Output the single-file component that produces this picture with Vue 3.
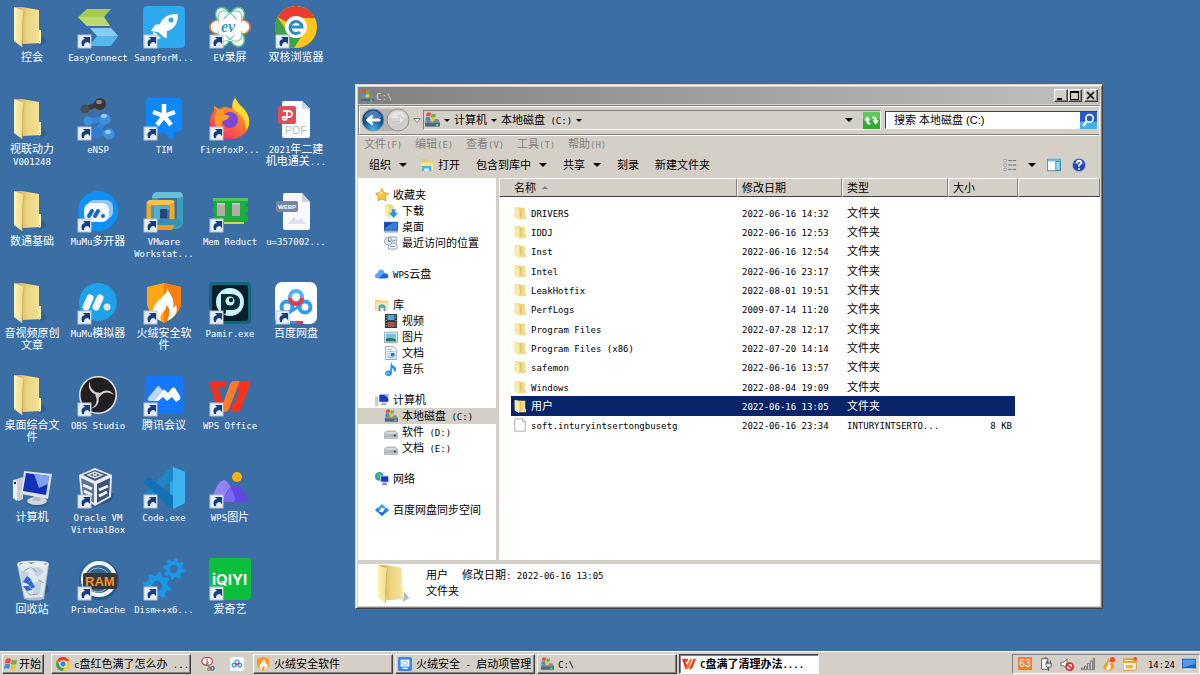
<script setup>
import { h } from 'vue'

// Splits a string into Han and Latin runs so each gets its own face and size.
const T = (props) =>
  h(
    'span',
    { class: 'txt' },
    (props.s.match(/[\u2e80-\uffff]+|[^\u2e80-\uffff]+/g) || []).map((r) =>
      h('span', { class: r.charCodeAt(0) > 0x2e7f ? 'han' : 'lat' }, r)
    )
  )
T.props = ['s']

const gear = (cx, cy, r, teeth, hole) => {
  let d = ''
  const n = teeth * 4
  for (let i = 0; i < n; i++) {
    const rad = i % 4 < 2 ? r : r * 0.74
    const a = ((i + 0.5) / n) * Math.PI * 2
    d += (i ? 'L' : 'M') + (cx + rad * Math.cos(a)).toFixed(1) + ' ' + (cy + rad * Math.sin(a)).toFixed(1)
  }
  return `${d}ZM${cx - hole} ${cy}a${hole} ${hole} 0 1 0 ${hole * 2} 0a${hole} ${hole} 0 1 0 ${-hole * 2} 0Z`
}

const baidu = `<circle cx="12" cy="25" r="5.500" fill="none" stroke="#2f9cf0" stroke-width="4"/><circle cx="30" cy="25" r="5.500" fill="none" stroke="#2f9cf0" stroke-width="4"/><path d="M15 21l6-3 6 3M16 29q6-2 10-8" stroke="#2f9cf0" stroke-width="3" fill="none"/><circle cx="21" cy="15" r="6" fill="#fff" stroke="#4bb4f6" stroke-width="4"/><path d="M15 16a6 6 0 0 0 12 0" fill="none" stroke="#e8384f" stroke-width="4"/>`
const flag = (x, y, s) => `<g transform="translate(${x} ${y}) scale(${s})"><path d="M1 1.500Q4-.5 7 1.500L6 6.500Q3.500 5 0 6.500Z" fill="#e8502a"/><path d="M8 2Q11 3.500 14 2L13 7Q10 8.500 7 7Z" fill="#6cb33e"/><path d="M0 7.500Q3 6 6 7.500L5 12.500Q2.500 11-1 12.500Z" fill="#3b8ede"/><path d="M7 8Q10 9.500 13 8L12 13Q9 14.500 6 13Z" fill="#f8bf2d"/></g>`

const pics = {
  folder: `<path d="M29 40l7-4-5-7z" fill="#24466f" opacity=".35"/><path d="M4 1h7l17 3v20l2 1v12l-18 1z" fill="url(#fBody)"/><path d="M28 24h2v12l-2 2z" fill="#f8f3b6"/><path d="M28 35h1v1h-1z" fill="#9cc08a"/><path d="M3 1l10 4-1 8-1 28-8-6z" fill="url(#fLeaf)"/><path d="M13 5l-1 8-1 28" fill="none" stroke="#c9ad58" stroke-width=".8"/>`,
  easy: `<path d="M1 11L10 3h24l-7 8 6 9H10z" fill="#a5cc4d"/><path d="M1 11h26l6 9H10z" fill="#b9db6e"/><path d="M13 22h21l7 8-7 10H12l8-10z" fill="#57b5ea"/><path d="M13 22h21l7 8H20z" fill="#85cdf5"/>`,
  sangfor: `<rect width="42" height="42" rx="4" fill="#2ea8ef"/><path d="M35 8C27 8 20 10 17 18L12 19 8 25l7 1 7 6 1 0 1-1v-6l3-1C33 21 35 15 35 8z" fill="#fff"/><path d="M10 25l8 7-8 3z" fill="#fff" opacity=".9"/><circle cx="28" cy="14" r="2.500" fill="#2ea8ef"/><path d="M10 33c0-4 2-5 4-5" stroke="#fff" fill="none" stroke-width="2"/>`,
  ev: `<g fill="#fff" stroke-width="1.600"><ellipse cx="14" cy="10" rx="7" ry="9" transform="rotate(-28 14 10)" stroke="#4cb487"/><ellipse cx="28" cy="10" rx="7" ry="9" transform="rotate(28 28 10)" stroke="#4cb487"/><ellipse cx="9" cy="21" rx="8" ry="7" stroke="#e08145"/><ellipse cx="33" cy="21" rx="8" ry="7" stroke="#e08145"/><ellipse cx="14" cy="32" rx="7" ry="9" transform="rotate(28 14 32)" stroke="#4cb487"/><ellipse cx="28" cy="32" rx="7" ry="9" transform="rotate(-28 28 32)" stroke="#4cb487"/></g><circle cx="21" cy="21" r="14" fill="#fff"/><g fill="none" stroke="#6fc3a2"><ellipse cx="21" cy="20" rx="9" ry="17" transform="rotate(32 21 20)"/><ellipse cx="21" cy="20" rx="9" ry="17" transform="rotate(-32 21 20)"/></g><ellipse cx="21" cy="21" rx="13" ry="9" fill="#fff"/><text x="12" y="26" font-family="Liberation Serif, serif" font-style="italic" font-weight="bold" font-size="16" fill="#3c9bd0">ev</text>`,
  chrome: `<circle cx="21" cy="21" r="21" fill="#fcc61b"/><path d="M21 21L2.500 11A21 21 0 0 1 40 12H21z" fill="#ea3d2f"/><path d="M2.500 11A21 21 0 0 0 19 42l9-14-14 0z" fill="#3fa24b"/><circle cx="21" cy="21" r="11" fill="#fff"/><path d="M15 21h12a6 6 0 1 0-2 5" fill="none" stroke="#2a8dc8" stroke-width="3"/>`,
  ensp: `<g stroke-linecap="round"><path d="M8 11L16 8 24 4" stroke="#39393d" stroke-width="5" fill="none"/><circle cx="8" cy="11" r="4.500" fill="#4b4b50"/><circle cx="23" cy="6" r="6" fill="#3c3736"/><ellipse cx="22" cy="4" rx="3" ry="2" fill="#8d8783"/><path d="M12 23L28 21 20 34 32 36" stroke="#3586da" stroke-width="6" fill="none" stroke-linejoin="round"/><circle cx="11" cy="23" r="4.500" fill="#3e90e0"/><circle cx="28" cy="21" r="5.500" fill="#3e90e0"/><circle cx="19" cy="35" r="6" fill="#2f7dcf"/><circle cx="32" cy="36" r="5.500" fill="#3e90e0"/><ellipse cx="27" cy="18" rx="3" ry="2" fill="#98cbf6"/><ellipse cx="31" cy="34" rx="3" ry="2" fill="#98cbf6"/></g>`,
  tim: `<path d="M7 0h28q4 0 4 4v26q0 4-4 4l-5 0v8l-8-7H7q-4 0-4-4V4q0-4 4-4z" fill="#0c88fb"/><path d="M21 18V6M21 18l-11-4M21 18l11-4M21 18l-7 9M21 18l7 9" stroke="#fff" stroke-width="4.500"/>`,
  firefox: `<path d="M26 0c3 4 3 6 8 10 7 7 8 17 3 24-6 8-21 10-30 3C-1 31-1 20 5 13V8l5 3 5-2c4 0 6 1 8 2 0-4 0-7 3-11z" fill="url(#fox)"/><path d="M26 0c3 4 3 6 8 10 7 7 8 17 3 22 0-9-3-14-8-17-6-4-7-8-3-15z" fill="#ffdb33"/><circle cx="21" cy="22" r="8" fill="#7a46dc"/><path d="M5 8l6 4 6-2-3 6 7 2c-2 4-6 4-8 6 0 0-3 6 4 9-10 0-15-11-9-20z" fill="#ff9b2b"/>`,
  pdf: `<path d="M9 3h18l8 8v27q0 2-2 2H9q-2 0-2-2V5q0-2 2-2z" fill="#fdfdfe"/><path d="M27 3l8 8h-8z" fill="#c9d6e6"/><rect x="3" y="8" width="18" height="18" rx="2" fill="#e34b57"/><path d="M8 13h5q4 0 4 3t-4 3h-1M12 13v6q0 3-3 3-2-1-1-3h4" fill="none" stroke="#fff" stroke-width="1.800"/><text x="10" y="36" font-family="Liberation Sans, sans-serif" font-size="11" fill="#b9bcc3">PDF</text>`,
  webp: `<path d="M10 3h17l8 9v26q0 2-2 2H10q-2 0-2-2V5q0-2 2-2z" fill="#f8f9fc"/><path d="M27 3l8 9h-8z" fill="#c6cfe0"/><path d="M13 34l6-7 4 4 3-3 5 6z" fill="#dde1ec"/><rect x="1" y="11" width="22" height="11" rx="2" fill="#7784a6"/><text x="3" y="19" font-family="Liberation Sans, sans-serif" font-weight="bold" font-size="6" fill="#fff">WEBP</text>`,
  mumu2: `<circle cx="21" cy="21" r="20" fill="#1090f4"/><rect x="10" y="10" width="26" height="19" rx="7" fill="#8fc8fa"/><rect x="7" y="13" width="25" height="19" rx="7" fill="#f4faff"/><path d="M12 26l3-5M18 26l3-5" stroke="#1266d8" stroke-width="4" stroke-linecap="round"/><circle cx="26" cy="26" r="2" fill="#1266d8"/>`,
  vm: `<rect x="12" y="5" width="25" height="31" rx="4" fill="none" stroke="#3d9fbd" stroke-width="6"/><path d="M14 2h22q4 0 4 5l-6 1H9q0-6 5-6z" fill="#66bfd6"/><rect x="6" y="13" width="23" height="19" rx="2" fill="none" stroke="#f7a823" stroke-width="5"/><path d="M6 10h23q2 0 3 2l-6 3H8l-5-2z" fill="#fdc24c"/><path d="M11 16h15v4h-9v10h-6z" fill="#52aeca"/><path d="M17 19h7v9h-7z" fill="#23486e"/><path d="M12 29h26v7H12z" fill="#3392b2"/><path d="M12 35h19q0 5-4 5H12z" fill="#f09b24"/>`,
  mem: `<path d="M4 8h35v5l-2 2 2 3v4l-2 2 2 3v5H4v-5l2-2-2-3v-4l2-2-2-3z" fill="#1eac3d"/><path d="M4 8h35v3H4z" fill="#43c95c"/><path d="M15 32h20v2H15z" fill="#d8cf4a"/><rect x="8" y="13" width="8" height="13" fill="#b6aaa4"/><rect x="23" y="13" width="8" height="13" fill="#b6aaa4"/><path d="M8 14h8M23 14h8" stroke="#e4dcd6"/>`,
  mumu: `<circle cx="21" cy="20" r="19" fill="#1da2ea"/><path d="M9 25l4-9M19 25l4-9" stroke="#f4f8fb" stroke-width="7" stroke-linecap="round"/><circle cx="30" cy="25" r="3.500" fill="#dfe7ee"/>`,
  huorong: `<path d="M4 5L21 1l17 4v18q-3 11-17 18Q7 34 4 23z" fill="#ffa712"/><path d="M21 1l17 4v18q-3 11-17 18z" fill="#f47f10"/><path d="M24 6c2 7-14 13-14 23 0 5 4 8 8 10-3-8 7-10 5-16 5 3 4 10 1 16 9-4 11-10 9-16l-3 3C32 16 27 13 24 6z" fill="#fff"/>`,
  pamir: `<rect width="42" height="42" rx="4" fill="#12687a"/><rect x="3" y="3" width="36" height="36" rx="3" fill="#061e2a"/><circle cx="21" cy="20" r="14" fill="#c9f3f4"/><path d="M12 35V12h9q10 0 10 8 0 9-10 8h-4v3z" fill="#0b2a38"/><circle cx="21" cy="19" r="4.500" fill="#c9f3f4"/><circle cx="22" cy="18" r="2.200" fill="#0b2a38"/>`,
  baidu: `<rect width="42" height="42" rx="7" fill="#fff"/>${baidu}<path d="M15 39h6v3h-6z" fill="#2f8cf0"/><path d="M21 39h7v3h-7z" fill="#e8384f"/>`,
  obs: `<circle cx="21" cy="21" r="19" fill="#e9e9e9"/><circle cx="21" cy="21" r="17.500" fill="#211f21"/><g fill="#cfcfd0"><path d="M13 7q-4 10 7 14l2-2Q12 17 13 7z"/><path d="M13 7q-4 10 7 14l2-2Q12 17 13 7z" transform="rotate(120 21 21)"/><path d="M13 7q-4 10 7 14l2-2Q12 17 13 7z" transform="rotate(240 21 21)"/></g><circle cx="21" cy="21" r="2.500" fill="#cfcfd0"/>`,
  meeting: `<rect x="2" y="2" width="38" height="38" rx="4" fill="#1677fa"/><path d="M5 24L14 13q2-2 3 0l5 7-7 7H7q-3 0-2-3z" fill="#bcd7ff"/><path d="M12 27L20 16q1-1 2 0l3 3 4-5q2-1 3 0l5 8q1 3-1 4l-3 2-4-5-5 4-4-4-5 4z" fill="#fff"/>`,
  wps: `<path d="M0 7h18l-2 7H9l5 14-2 10H9Q4 22 0 7z" fill="#f22d22"/><path d="M11 38L21 10q1-3 5-3h5L20 35q-1 3-5 3z" fill="#ff7a2a"/><path d="M21 38l3-9 2-1 5-14 3-7h8L32 35q-1 3-5 3z" fill="#f5331f"/><path d="M31 7h4l-3 8h-4z" fill="#f5331f"/>`,
  computer: `<ellipse cx="27" cy="37" rx="12" ry="4" fill="#2c5580" opacity=".5"/><path d="M2 14l10-3v22l-4 2-6-3z" fill="#c9ccd0"/><path d="M2 14l4 1v20l-4-3z" fill="#f0f1f2"/><path d="M3 16h2v2H3z" fill="#222"/><ellipse cx="26" cy="35" rx="10" ry="4" fill="#d5d7d9"/><path d="M23 29h6l1 6h-8z" fill="#b9bdc2"/><path d="M13 5l28 3-4 25-27-5z" fill="#dfe2e5"/><path d="M15 7l23 3-3 19-23-4z" fill="#1230b8"/><path d="M23 8l15 2-1 8-9 4z" fill="#7fa5ee"/>`,
  vbox: `<path d="M3 34l15 7 16-6 3-8z" fill="#1e3b5e" opacity=".5"/><path d="M2 9L18 2l17 7-1 22-16 9L4 30z" fill="#e8ecf3"/><path d="M6 9l12-5 13 5-13 6z" fill="#43536c"/><path d="M4 12l13 6v19L6 30z" fill="#5d7594"/><path d="M20 18l13-6-1 18-12 7z" fill="#3a5478"/><path d="M11 9l7-3 7 3-7 3zM15 7l6 4M21 7l-6 4" fill="none" stroke="#d8dfe8" stroke-width="1.400"/><path d="M6 19l9 4M7 25l8 4M22 24l9-4M22 30l8-4" stroke="#f2f5f9" stroke-width="3"/>`,
  code: `<path d="M30 1l12 5v31l-12 6-3-4V5z" fill="#2ba7ea"/><path d="M30 1v13L6 33l-5-4v-2L26 3z" fill="#1f86c8"/><path d="M30 43V30L6 11l-5 4v2l25 24z" fill="#1172b5"/><path d="M30 1l12 5v31l-12 6z" fill="#3cb2f0"/>`,
  wpspic: `<circle cx="28" cy="11" r="5" fill="#fbb212"/><path d="M3 33q5-18 12-19 5 0 11 19 1 3-3 3H6q-4 0-3-3z" fill="#9382f5"/><path d="M15 33q4-14 13-14 3 1 11 14 2 3-2 3H14q0-1 1-3z" fill="#6149e0"/><path d="M15 33q3-8 7-11 3 5 4 10 1 4-3 4h-9z" fill="#7b68f0"/>`,
  bin: `<path d="M30 40l8-7-2-8z" fill="#24466f" opacity=".4"/><path d="M6 6h32l-5 35q-9 3-20 0z" fill="#aebfcb"/><path d="M7 6l8-3 5 3 7-3 10 3-5 33-18 1z" fill="#dfe8ee"/><path d="M10 12l8 3-3 9-5 3zM20 10l7-2 6 6-7 5zM22 26l9-4-2 14-7 2z" fill="#c2d2df"/><path d="M13 13l7-4 6 5M27 22l6 3M14 31l5 6 8-1" stroke="#8fa5b7" fill="none"/><path d="M12 24l4-6 4 3-3 5zM20 22l4 7-4 2-3-5zM12 28l4 5 5-1-2-4z" fill="#2e67d2"/><ellipse cx="22" cy="6" rx="15" ry="2.500" fill="#7d7f80" stroke="#e9f1f5" stroke-width="1.500"/><path d="M9 7l6-4 5 3 7-3 8 3-8 3H14z" fill="#e6eef3"/>`,
  ram: `<circle cx="22" cy="22" r="20" fill="#275a83"/><circle cx="20" cy="20" r="18" fill="#2e6794"/><circle cx="22" cy="21" r="16" fill="none" stroke="#f0f4f7" stroke-width="4"/><circle cx="21" cy="22" r="12" fill="none" stroke="#9fb8cb" stroke-width="1"/><rect x="6" y="15" width="34" height="16" rx="2" fill="#34373c"/><text x="8" y="28" font-family="Liberation Sans, sans-serif" font-weight="bold" font-size="13" fill="#f7931e">RAM</text>`,
  dism: `<path d="${gear(31, 11, 11, 8, 4)}" fill="#1c96e6" fill-rule="evenodd"/><path d="${gear(14, 28, 14, 8, 5)}" fill="#1c96e6" fill-rule="evenodd"/>`,
  iqiyi: `<rect width="42" height="42" rx="3" fill="#0bbe3c"/><text x="3" y="27" font-family="Inter, sans-serif" font-weight="bold" font-size="15" fill="#fff">iQIYI</text>`
}

// Glyphs on a 16-unit grid.
const small = {
  disk: `<path d="M1 10l3-3h10l2 3v4q0 1-1 1H2q-1 0-1-1z" fill="#78909c"/><path d="M1 11h15v3H1z" fill="#4f6a78"/><path d="M12 12h2v2h-2z" fill="#5fe06c"/>${flag(2, 0, 0.7)}`,
  winflag: flag(1, 1, 1),
  folder: `<path d="M2 1l7 1v12l-7-1z" fill="#e9cf6d"/><path d="M8 2h6v9h1v4H6z" fill="#f0dc8c"/><path d="M2 1l5 2v13l-5-3z" fill="#f8eba9"/><path d="M9 3v10" stroke="#d4b654"/>`,
  file: `<path d="M2 1h9l3 3v11H2z" fill="#fff" stroke="#a3a3a3"/><path d="M11 1v3h3" fill="#eee" stroke="#a3a3a3"/>`,
  star: `<path d="M8 1l2.200 4.600 5 .6-3.700 3.500 1 5L8 12.300 3.500 14.700l1-5L.8 6.200l5-.6z" fill="#ffc936" stroke="#e58a1b"/><path d="M8 3l1 4H4z" fill="#ffe89a"/>`,
  download: `<path d="M1 1l5-1 5 2v11l-5 2-5-2z" fill="#efda84"/><path d="M1 1l5 2v12l-5-2z" fill="#f8eba9"/><path d="M9 6h4v4h3l-5 6-5-6h3z" fill="#2d8fe6"/>`,
  desktop: `<path d="M0 2h16v12H0z" fill="#1f57b4"/><path d="M1 3h14v8H1z" fill="#3b7cd8"/><path d="M1 3h9L1 9z" fill="#1d4396"/><path d="M0 12h16v2H0z" fill="#8fb6e6"/>`,
  recent: `<path d="M5 1h9v11l2 1-2 2H5z" fill="#eef3f8" stroke="#8a9bab"/><circle cx="5" cy="6" r="4.500" fill="#dfeaf4" stroke="#7f95a8"/><path d="M5 3v3h3" stroke="#456" fill="none"/><path d="M10 5h3M10 8h3M7 12h5" stroke="#5d8fc2"/>`,
  cloud: `<path d="M4 13q-4 0-4-3t3-3q1-5 5-4 3 1 3 4l-3 3z" fill="#5aa5f7"/><path d="M4 13l5-5q3-2 5 0 2 2 1 4-1 1-3 1z" fill="#1868dc"/>`,
  library: `<path d="M0 2h6l1 1h8v11H0z" fill="#edd375"/><path d="M1 5h14v9H1z" fill="#f8eaa5"/><path d="M4 15V9q4-4 8 0v6h-2v-4H6v4z" fill="#49a3da"/>`,
  open: `<path d="M1 1h7l1 2h6v11H1z" fill="#f0cc55"/><path d="M1 5h14v9H1z" fill="#fae795"/><path d="M2 9h11v6H2z" fill="#55b5dd"/><path d="M5 12h5v3H5z" fill="#edf8fd"/>`,
  video: `<path d="M1 0h14v16H1z" fill="#2c3236"/><path d="M4 1h8v6H4z" fill="#55a3d8"/><path d="M4 9h8v6H4z" fill="#9c5b46"/><path d="M2.500 1v14M13.500 1v14" stroke="#fff" stroke-dasharray="1 2"/>`,
  picture: `<path d="M.5 2.500h15v12H.5z" fill="#fff" stroke="#829aaf"/><path d="M2 4h12v9H2z" fill="#79c0ea"/><path d="M2 10q5-3 12 1v2H2z" fill="#2b7a59"/>`,
  doc: `<path d="M2 .5h9l3 3v12H2z" fill="#f7fbff" stroke="#7f9cb8"/><path d="M4 4h5M4 6.500h8M4 9h4M4 11.500h4M4 13.500h8" stroke="#7aaad8"/><path d="M8 8h4v4H8z" fill="#2d6fc8"/>`,
  music: `<path d="M8 0q1 4 5 6 2 3-1 6 0-4-3-5v5q0 4-4 4-4-1-4-3 1-4 6-3z" fill="#2090ea"/><ellipse cx="4" cy="13" rx="2" ry="1" fill="#8dcbf8"/>`,
  pc: `<path d="M0 4h4v11H0z" fill="#c9ccd0"/><path d="M4 1h12v10H4z" fill="#dcdfe3"/><path d="M5 2h10v8H5z" fill="#1b36c0"/><path d="M10 2h5v4z" fill="#84a4ee"/><path d="M8 11h4l2 3H6z" fill="#a8adb3"/>`,
  drive: `<path d="M3 7h10l3 3v4q0 1-1 1H1q-1 0-1-1v-4z" fill="#d8dadb" stroke="#90989d"/><path d="M1 10h14v4H1z" fill="#b6bbbe"/><path d="M11 11h3v2h-3z" fill="#4a5054"/>`,
  network: `<circle cx="5" cy="5" r="5" fill="#2c9ed2"/><path d="M2 2q3-2 5 1L4 8Z" fill="#58bb57"/><path d="M6 4h10v8H6z" fill="#cfd6de"/><path d="M7 5h8v6H7z" fill="#1a35c2"/><path d="M9 12h4l1 3H8z" fill="#8c96a2"/>`,
  sync: `<path d="M2 8V7l6-6 5 5h-4L8 5 5 8z" fill="#34a4f8"/><path d="M14 8v1l-6 6-5-5h4l1 1 3-3z" fill="#176be6"/><path d="M0 8l3-3 3 3-3 3zM16 8l-3 3-3-3 3-3z" fill="#2388f2"/>`,
  refresh: `<path d="M0 0h16v16H0z" fill="#2faa35"/><path d="M0 0h16v7H0z" fill="#5dc85b"/><path d="M1 8l3-4 3 4H5q0 2 2 2v2q-4 0-4-4zM15 8l-3 4-3-4h2q0-2-2-2V4q4 0 4 4z" fill="#fff"/>`,
  lens: `<path d="M0 0h16v16H0z" fill="#2458cc"/><path d="M0 9h16v7H0z" fill="#43b0ec"/><circle cx="9" cy="6" r="3.500" fill="none" stroke="#fff" stroke-width="1.600"/><path d="M6.500 8.500L3 13" stroke="#fff" stroke-width="2.200"/>`,
  views: `<g fill="#fff" stroke="#7b92a5"><circle cx="2.500" cy="3" r="1.500"/><circle cx="2.500" cy="8" r="1.500"/><circle cx="2.500" cy="13" r="1.500"/></g><path d="M6 3h4M11 3h4M6 8h4M11 8h4M6 13h4M11 13h4" stroke="#4d5c68"/>`,
  pane: `<path d="M.5 1.500h15v13H.5z" fill="#fff" stroke="#3b87ae"/><path d="M1 2h14v2H1z" fill="#78c0de"/><path d="M10 4h5v10h-5z" fill="#9edcf0" stroke="#3b87ae"/>`,
  help: `<circle cx="8" cy="8" r="7.500" fill="#2648ae" stroke="#a9b8d8"/><path d="M2 6q6-7 12 0-6 3-12 0z" fill="#5d80d8"/><path d="M5.500 6q0-3 2.500-3t2.500 2.500Q10.500 7 8 8.500V10M8 11.500v2" stroke="#fff" stroke-width="1.800" fill="none"/>`,
  chrome: `<g transform="scale(.38)"><circle cx="21" cy="21" r="21" fill="#fcc61b"/><path d="M21 21L2.500 11A21 21 0 0 1 40 12H21z" fill="#ea3d2f"/><path d="M2.500 11A21 21 0 0 0 19 42l9-14-14 0z" fill="#3fa24b"/><circle cx="21" cy="21" r="11" fill="#fff"/><circle cx="21" cy="21" r="8" fill="#3c7ff0"/></g>`,
  snip: `<ellipse cx="7" cy="5" rx="6" ry="4.500" fill="#fff" stroke="#c0432f" stroke-width="1.500"/><path d="M7 2v7l5 5M9 6l-4 3" stroke="#7d8890" stroke-width="1.500" fill="none"/><circle cx="13" cy="13" r="2" fill="none" stroke="#3a6fa8" stroke-width="1.500"/><circle cx="9" cy="14" r="1.500" fill="none" stroke="#c0432f"/>`,
  baidu: `<rect width="16" height="16" rx="3" fill="#fff"/><g transform="scale(.38)">${baidu}</g>`,
  flame: `<path d="M1 2l7-2 7 2v7q-1 4-7 7-6-3-7-7z" fill="#f99a1c"/><path d="M9 2C9 6 4 7 4 11q0 3 3 4-1-3 2-5 2 2 0 5 4-1 4-5 0-2-1-3l-1 1Q11 4 9 2z" fill="#fff"/>`,
  guard: `<rect width="16" height="16" rx="2" fill="#3c85f2"/><path d="M3 3h10v8H3z" fill="#fff"/><circle cx="8" cy="7" r="2.500" fill="none" stroke="#6da4f5"/><path d="M5 13h6" stroke="#fff" stroke-width="1.500"/>`,
  wps: `<path d="M0 2h7L6 5H4l2 5-1 4H4z" fill="#f22d22"/><path d="M4 14L8 4q1-2 2-2h2L8 12q-1 2-2 2z" fill="#ff7a2a"/><path d="M8 14l4-9 1-3h3l-4 10q-1 2-2 2z" fill="#f5331f"/>`,
  plug: `<path d="M3 2h7v12H3zM5 0h3v2" fill="#fff" stroke="#4c4c4c"/><path d="M9 4v3M13 4v3M8 7h6v3q0 2-3 2t-3-2zM11 12v4" fill="#f4f4f4" stroke="#3f3f3f"/>`,
  mute: `<path d="M1 6h3l4-4v12l-4-4H1z" fill="#f1f1f1" stroke="#666"/><circle cx="11" cy="11" r="4" fill="#fff" stroke="#db2525" stroke-width="2"/><path d="M8 8l6 6" stroke="#db2525" stroke-width="2"/>`,
  signal: `<g fill="#eee" stroke="#6b6b6b"><path d="M.5 12.500h2v2h-2zM4 10.500h2v4H4zM7.500 7.500h2v7h-2zM11 4.500h2v10h-2zM14 1.500h1.500v13H14z"/></g>`,
  flameDot: `<path d="M7 1Q7 5 3 8-1 14 7 16q7-1 7-7-1-2-3-3-1 2-2 2 1-4-2-7z" fill="#f99a1c"/><path d="M7 6q1 3-2 5-1 4 3 4 4-3 0-9z" fill="#fff"/><circle cx="12" cy="3" r="3" fill="#ef4a31"/>`,
  calendar: `<rect x="0" y="2" width="15" height="13" rx="1" fill="#fff" stroke="#d78522"/><path d="M0 2h15v5H0z" fill="#f1a436"/><path d="M3 9h9v4H3z" fill="#f4b350"/><path d="M2 4h8" stroke="#fff"/><circle cx="14" cy="2" r="2" fill="#ed4a30"/>`,
  screen: `<path d="M0 2h16v11H0z" fill="#2360b8"/><path d="M1 3h14v5L1 12z" fill="#4c9ae8"/><path d="M2 13h10l-2 2H4z" fill="#dce8f4"/>`
}

const shortcuts = [
  ['folder', '控会'], ['folder', '视联动力\nV001248'], ['folder', '数通基础'], ['folder', '音视频原创\n文章'], ['folder', '桌面综合文\n件'], ['computer', '计算机'], ['bin', '回收站'],
  ['easy', 'EasyConnect', 1], ['ensp', 'eNSP', 1], ['mumu2', 'MuMu多开器', 1], ['mumu', 'MuMu模拟器', 1], ['obs', 'OBS Studio', 1], ['vbox', 'Oracle VM\nVirtualBox', 1], ['ram', 'PrimoCache', 1],
  ['sangfor', 'SangforM...', 1], ['tim', 'TIM', 1], ['vm', 'VMware\nWorkstat...', 1], ['huorong', '火绒安全软\n件', 1], ['meeting', '腾讯会议', 1], ['code', 'Code.exe', 1], ['dism', 'Dism++x6...', 1],
  ['ev', 'EV录屏', 1], ['firefox', 'FirefoxP...', 1], ['mem', 'Mem Reduct', 1], ['pamir', 'Pamir.exe', 1], ['wps', 'WPS Office', 1], ['wpspic', 'WPS图片', 1], ['iqiyi', '爱奇艺', 1],
  ['chrome', '双核浏览器', 1], ['pdf', '2021年二建\n机电通关...'], ['webp', 'u=357002...'], ['baidu', '百度网盘', 1]
].map(([icon, label, link]) => ({ icon, lines: label.split('\n'), link }))

const menus = ['文件(F)', '编辑(E)', '查看(V)', '工具(T)', '帮助(H)']
const nav = [
  [['star', '收藏夹'], ['download', '下载'], ['desktop', '桌面'], ['recent', '最近访问的位置']],
  [['cloud', 'WPS云盘']],
  [['library', '库'], ['video', '视频'], ['picture', '图片'], ['doc', '文档'], ['music', '音乐']],
  [['pc', '计算机'], ['disk', '本地磁盘 (C:)', true], ['drive', '软件 (D:)'], ['drive', '文档 (E:)']],
  [['network', '网络']],
  [['sync', '百度网盘同步空间']]
]
const files = [
  ['DRIVERS', '2022-06-16 14:32'], ['IDDJ', '2022-06-16 12:53'], ['Inst', '2022-06-16 12:54'], ['Intel', '2022-06-16 23:17'],
  ['LeakHotfix', '2022-08-01 19:51'], ['PerfLogs', '2009-07-14 11:20'], ['Program Files', '2022-07-28 12:17'], ['Program Files (x86)', '2022-07-20 14:14'],
  ['safemon', '2022-06-16 13:57'], ['Windows', '2022-08-04 19:09'], ['用户', '2022-06-16 13:05'],
  ['soft.inturyintsertongbusetg', '2022-06-16 23:34', 'INTURYINTSERTO...', '8 KB']
]
const tasks = [
  ['flame', '火绒安全软件'], ['guard', '火绒安全 - 启动项管理'], ['disk', 'C:\\'], ['wps', 'C盘满了清理办法....', true]
]
</script>

<template>
  <div class="screen">
    <svg class="defs" aria-hidden="true">
      <defs>
        <linearGradient id="fBody" x1="0" x2="1"><stop offset="0" stop-color="#c9ab52" /><stop offset=".5" stop-color="#ecd584" /><stop offset="1" stop-color="#f3e39c" /></linearGradient>
        <linearGradient id="fLeaf" x1="0" x2="1"><stop offset="0" stop-color="#fbf3b8" /><stop offset="1" stop-color="#eeda86" /></linearGradient>
        <linearGradient id="fox" x1="1" y1="0" x2="0.3" y2="1"><stop offset="0" stop-color="#ffd43a" /><stop offset=".5" stop-color="#ff7a2a" /><stop offset="1" stop-color="#f2326a" /></linearGradient>
        <radialGradient id="orb" cx=".5" cy=".9"><stop offset="0" stop-color="#41b4ea" /><stop offset="1" stop-color="#124d8c" /></radialGradient>
      </defs>
    </svg>

    <main class="desktop">
      <div class="shortcuts">
        <button v-for="s in shortcuts" :key="s.lines[0]" class="shortcut">
          <svg viewBox="0 0 42 42" aria-hidden="true">
            <g v-html="pics[s.icon]"></g>
            <g v-if="s.link">
              <rect x="1" y="29" width="13" height="13" fill="#e9eef4" stroke="#b9c3cf" stroke-width="1" />
              <path d="M5 40q-2-6 3-7l-2-2h7v7l-2-2q-4 0-4 4z" fill="#153f7c" />
            </g>
          </svg>
          <span class="label"><T v-for="l in s.lines" :key="l" :s="l" /></span>
        </button>
      </div>

      <section class="window">
        <header class="title">
          <svg class="ic" viewBox="0 0 16 16" v-html="small.disk"></svg>
          <T s="C:\" />
          <span class="grow"></span>
          <button class="ctl" aria-label="Minimize"><svg viewBox="0 0 11 9"><path d="M2 7h5v2H2z" /></svg></button>
          <button class="ctl" aria-label="Maximize"><svg viewBox="0 0 11 9"><path d="M1 0h9v9H1zM2 2v6h7V2z" fill-rule="evenodd" /></svg></button>
          <button class="ctl close" aria-label="Close"><svg viewBox="0 0 11 9"><path d="M2 1l7 7M9 1L2 8" stroke="#000" stroke-width="1.600" /></svg></button>
        </header>

        <div class="addressbar">
          <svg class="orbs" viewBox="0 0 50 24" aria-hidden="true">
            <path d="M11 1h25v22H11z" fill="#b5b3ad" />
            <circle cx="12" cy="12" r="11" fill="url(#orb)" stroke="#7d97ae" />
            <path d="M3 9q9-13 18 0-9 5-18 0z" fill="#6f9fc8" opacity=".6" />
            <path d="M5 12l6-5 1 1-2 3h9v2h-9l2 3-1 1z" fill="#fff" stroke="#fff" />
            <circle cx="37" cy="12" r="11" fill="#cfcecb" stroke="#8f8f8c" />
            <path d="M28 9q9-12 18 0-9 5-18 0z" fill="#e4e4e2" />
            <path d="M44 12l-6-5-1 1 2 3h-9v2h9l-2 3 1 1z" fill="#e6e6e4" stroke="#c4c4c2" />
          </svg>
          <button class="plain hist" aria-label="History"><svg viewBox="0 0 8 5"><path d="M.5.5h7L4 4.500z" fill="#fff" stroke="#6f7d8c" /></svg></button>
          <div class="path">
            <svg class="ic big" viewBox="0 0 16 16" v-html="small.disk"></svg>
            <i class="tri s"></i>
            <button class="plain"><T s="计算机" /></button>
            <i class="tri s"></i>
            <button class="plain"><T s="本地磁盘 (C:)" /></button>
            <i class="tri s"></i>
            <span class="grow"></span>
            <i class="tri"></i>
            <button class="plain go" aria-label="Refresh"><svg viewBox="0 0 16 16" v-html="small.refresh"></svg></button>
          </div>
          <div class="search">
            <input type="text" aria-label="Search" value="搜索 本地磁盘 (C:)" />
            <button class="plain go" aria-label="Go"><svg viewBox="0 0 16 16" v-html="small.lens"></svg></button>
          </div>
        </div>

        <nav class="menus">
          <button v-for="m in menus" :key="m" class="plain"><T :s="m" /></button>
        </nav>

        <div class="commands">
          <button class="plain"><T s="组织" /><i class="tri"></i></button>
          <button class="plain open"><svg class="ic" viewBox="0 0 16 16" v-html="small.open"></svg><T s="打开" /></button>
          <button class="plain"><T s="包含到库中" /><i class="tri"></i></button>
          <button class="plain"><T s="共享" /><i class="tri"></i></button>
          <button class="plain"><T s="刻录" /></button>
          <button class="plain"><T s="新建文件夹" /></button>
          <span class="grow"></span>
          <div class="views">
            <button class="plain" aria-label="Views"><svg class="ic" viewBox="0 0 16 16" v-html="small.views"></svg><i class="tri"></i></button>
            <button class="plain" aria-label="Preview pane"><svg class="ic" viewBox="0 0 16 16" v-html="small.pane"></svg></button>
            <button class="plain" aria-label="Help"><svg class="ic" viewBox="0 0 16 16" v-html="small.help"></svg></button>
          </div>
        </div>

        <div class="body">
          <nav class="tree">
            <ul v-for="(g, i) in nav" :key="i">
              <li v-for="(n, j) in g" :key="n[1]" :class="{ child: j, on: n[2] }">
                <a href="#"><svg class="ic" viewBox="0 0 16 16" v-html="small[n[0]]"></svg><T :s="n[1]" /></a>
              </li>
            </ul>
          </nav>
          <div class="list">
            <table>
              <colgroup><col class="c1" /><col class="c2" /><col class="c3" /><col class="c4" /><col /></colgroup>
              <thead>
                <tr>
                  <th class="name"><T s="名称" /><i class="sort"></i></th>
                  <th><T s="修改日期" /></th>
                  <th><T s="类型" /></th>
                  <th><T s="大小" /></th>
                  <th></th>
                </tr>
              </thead>
              <tbody>
                <tr v-for="f in files" :key="f[0]" :class="{ on: f[0] === '用户' }">
                  <td class="name"><div><svg class="ic" viewBox="0 0 16 16" v-html="f[2] ? small.file : small.folder"></svg><T :s="f[0]" /></div></td>
                  <td><T :s="f[1]" /></td>
                  <td><T :s="f[2] || '文件夹'" /></td>
                  <td class="size"><T :s="f[3] || ''" /></td>
                  <td class="rest"></td>
                </tr>
              </tbody>
            </table>
          </div>
        </div>

        <footer class="details">
          <svg viewBox="0 0 42 42" aria-hidden="true" v-html="pics.folder"></svg>
          <div>
            <p><T s="用户" /><T s="修改日期: 2022-06-16 13:05" /></p>
            <p><T s="文件夹" /></p>
          </div>
        </footer>
      </section>
    </main>

    <footer class="taskbar">
      <button class="task start"><svg class="ic" viewBox="0 0 16 16" v-html="small.winflag"></svg><T s="开始" /></button>
      <button class="task"><svg class="ic" viewBox="0 0 16 16" v-html="small.chrome"></svg><T s="c盘红色满了怎么办 ..." /></button>
      <div class="quick">
        <button class="plain" aria-label="Snipping"><svg class="ic" viewBox="0 0 16 16" v-html="small.snip"></svg></button>
        <button class="plain" aria-label="Netdisk"><svg class="ic" viewBox="0 0 16 16" v-html="small.baidu"></svg></button>
      </div>
      <div class="tasks">
        <button v-for="t in tasks" :key="t[1]" class="task" :class="{ active: t[2] }">
          <svg class="ic" viewBox="0 0 16 16" v-html="small[t[0]]"></svg><T :s="t[1]" />
        </button>
      </div>
      <span class="grow"></span>
      <div class="tray">
        <span class="ime">63</span>
        <svg v-for="k in ['plug', 'mute', 'signal', 'flameDot', 'calendar']" :key="k" class="ic" viewBox="0 0 16 16" v-html="small[k]"></svg>
        <time><T s="14:24" /></time>
        <svg class="ic" viewBox="0 0 16 16" v-html="small.screen"></svg>
      </div>
    </footer>
  </div>
</template>

<style>
body { margin: 0; background: #3a6ea5; }
.txt { white-space: pre; }
.han, .lat { line-height: 0; }
.han { font-family: "Noto Sans CJK SC", sans-serif; font-size: 11px; }
.lat { font-family: "DejaVu Sans Mono", monospace; font-size: 9px; }
</style>

<style scoped>
.screen { display: flex; flex-direction: column; min-height: 100vh; background: #3a6ea5; color: #000; font: 11px/16px "Liberation Sans", "Noto Sans CJK SC", sans-serif; overflow: hidden; }
.defs { position: absolute; width: 0; height: 0; }
button { font: inherit; color: inherit; padding: 0; border: 0; background: none; }
.grow { flex: 1; }
.ic { width: 14px; height: 14px; flex: none; display: block; }
.desktop { flex: 1; position: relative; }

.shortcuts { display: grid; grid-auto-flow: column; grid-template-rows: repeat(7, 92px); grid-auto-columns: 64px; column-gap: 2px; }
.shortcut { display: flex; flex-direction: column; align-items: center; padding-top: 6px; gap: 3px; color: #fff; line-height: 12px; text-align: center; }
.shortcut > svg { width: 42px; height: 42px; flex: none; overflow: visible; }
.label { display: flex; flex-direction: column; align-items: center; }

.window { position: absolute; left: 355px; right: 97px; top: 84px; bottom: 42px; display: flex; flex-direction: column; box-sizing: border-box; background: #d4d0c8; border: 1px solid; border-color: #d4d0c8 #404040 #404040 #d4d0c8; box-shadow: inset 1px 1px #fff, inset -1px -1px #808080; padding: 2px; }
.title { display: flex; align-items: center; height: 17px; padding: 0 2px; color: #d4d0c8; background: linear-gradient(90deg, #808080, #c0c0c0); }
.title .ic { margin-right: 2px; }
.ctl { width: 14px; height: 13px; background: #d4d0c8; border: 1px solid; border-color: #fff #404040 #404040 #fff; box-shadow: inset -1px -1px #808080; }
.ctl svg { display: block; width: 11px; height: 9px; }
.close { margin-left: 2px; }

.addressbar { display: flex; align-items: center; height: 28px; margin-top: 1px; padding: 0 1px 0 2px; border: 1px solid; border-color: #808080 #fff #808080 #808080; box-shadow: inset 1px 1px #fff, 0 1px #fff; }
.orbs { width: 50px; height: 24px; }
.hist { width: 12px; }
.hist svg { width: 8px; height: 5px; display: block; margin: auto; }
.path { flex: 1; display: flex; align-items: center; height: 18px; border: 1px solid; border-color: #808080 #fff #fff #808080; }
.path .tri { margin-right: 10px; }
.path .tri.s { margin: 0 4px; }
.big { width: 16px; height: 16px; }
.tri { display: inline-block; width: 0; height: 0; border: 4px solid transparent; border-top-color: #000; border-bottom: 0; flex: none; }
.tri.s { border-width: 3px 3px 0; }
.go svg { display: block; width: 17px; height: 17px; }
.search { display: flex; align-items: center; width: 213px; height: 18px; margin-left: 4px; box-sizing: border-box; border: 1px solid; border-color: #404040 #fff #fff #404040; background: #fff; }
.search input { flex: 1; min-width: 0; height: 16px; box-sizing: border-box; border: 0; padding: 0 8px; background: none; font: 11px/16px "Liberation Sans", "Noto Sans CJK SC", sans-serif; }

.menus { display: flex; gap: 13px; padding: 0 6px; margin-top: 1px; height: 16px; margin-bottom: 2px; color: #808080; }
.menus .plain { width: 38px; text-align: left; white-space: nowrap; }
.commands { display: flex; align-items: center; gap: 16px; height: 22px; padding: 0 14px 2px 11px; }
.commands .plain { display: flex; align-items: center; gap: 8px; line-height: 16px; }
.commands .open { gap: 4px; margin-left: -3px; }
.commands .views { display: flex; gap: 11px; }
.commands .views .plain { gap: 11px; }

.body { flex: 1; display: flex; min-height: 0; gap: 3px; }
.tree { width: 138px; background: #fff; padding-top: 9px; box-sizing: border-box; }
.tree ul { list-style: none; margin: 0 0 15px; padding: 0; }
.tree a { display: flex; align-items: center; gap: 4px; height: 16px; padding-left: 17px; color: #000; text-decoration: none; }
.tree .child a { padding-left: 26px; }
.tree .on { background: #d4d0c8; }
.list { flex: 1; min-width: 0; background: #fff; }
table { width: 100%; table-layout: fixed; border-spacing: 0; height: 257px; }
.c1 { width: 238px; }
.c2 { width: 105px; }
.c3 { width: 106px; }
.c4 { width: 70px; }
th { height: 19px; box-sizing: border-box; padding: 0 0 0 4px; text-align: left; font-weight: normal; background: #d4d0c8; border: 1px solid; border-color: #fff #808080 #404040 #fff; }
th.name { padding-left: 14px; }
.sort { display: inline-block; border: 3px solid transparent; border-bottom-color: #808080; border-top: 0; margin: 0 0 3px 6px; }
tbody::before { content: ""; display: block; height: 5px; }
td { padding: 0 0 0 5px; line-height: 16px; background-clip: padding-box; white-space: nowrap; }
td.name { padding-left: 2px; border-left: 12px solid transparent; }
td.name div { display: flex; align-items: center; gap: 4px; }
td.size { text-align: right; padding-right: 3px; border-right: 3px solid transparent; }
tr.on td { background-color: #0a246a; color: #fff; }
tr.on td.rest { background: none; }

.details { display: flex; gap: 11px; margin-top: 4px; padding: 0 17px; background: #fff; height: 42px; }
.details svg { width: 40px; height: 40px; }
.details p { margin: 0; display: flex; gap: 14px; line-height: 16px; }
.details div { padding-top: 3px; }

.taskbar { display: flex; align-items: center; height: 23px; background: #d4d0c8; border-top: 1px solid #fff; padding-left: 2px; }
.task { display: flex; align-items: center; gap: 4px; flex: 0 1 140px; width: 140px; min-width: 0; height: 20px; box-sizing: border-box; padding: 0 4px; background: #d4d0c8; border: 1px solid; border-color: #fff #404040 #404040 #fff; box-shadow: inset -1px -1px #808080; overflow: hidden; }
.start { flex: none; width: 42px; margin-right: 7px; padding: 0 1px; gap: 1px; }
.active { background: #fff; font-weight: bold; border-color: #404040 #fff #fff #404040; box-shadow: inset 1px 1px #808080; }
.quick { display: flex; gap: 15px; padding: 0 9px 0 10px; }
.tasks { display: flex; gap: 2px; flex: 0 1 566px; min-width: 0; }
.tasks .task { padding: 0 2px; }
.tray { display: flex; align-items: center; gap: 7px; height: 20px; box-sizing: border-box; padding: 0 3px 0 5px; border: 1px solid; border-color: #808080 #fff #fff #808080; }
.ime { width: 14px; height: 13px; background: #f4793b; color: #fff; font-size: 10px; line-height: 13px; text-align: center; }
.tray time { margin-left: 4px; }
</style>
